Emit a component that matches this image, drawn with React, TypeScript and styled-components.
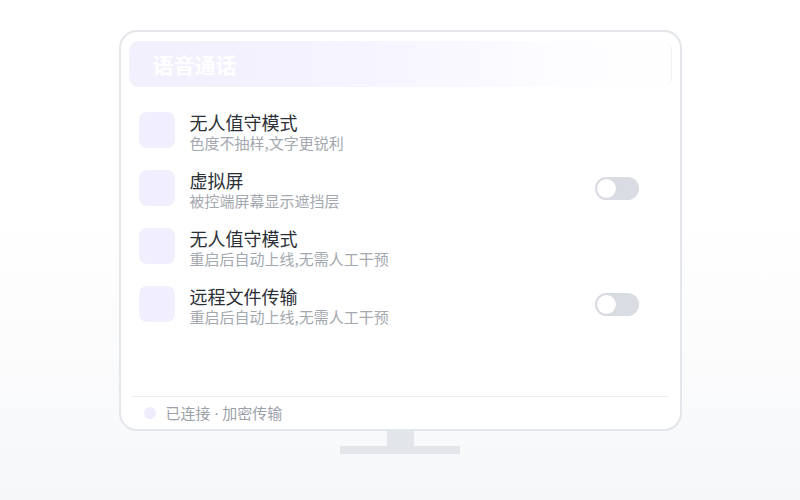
import React from "react";
import styled, { createGlobalStyle } from "styled-components";

const GlobalStyle = createGlobalStyle`
  html, body {
    margin: 0;
    padding: 0;
    background: #ffffff;
  }
  body {
    font-family: "Noto Sans CJK SC", "Noto Sans", sans-serif;
  }
  * { box-sizing: border-box; }
`;

const Page = styled.div`
  width: 800px;
  height: 500px;
  padding-top: 30px;
  display: flex;
  flex-direction: column;
  align-items: center;
  background: linear-gradient(180deg, #ffffff 0%, #ffffff 45%, #f6f7f9 100%);
`;

const Screen = styled.div`
  width: 563px;
  height: 401px;
  border: 2px solid #e3e6ea;
  border-radius: 18px;
  background: #ffffff;
  padding: 9px 8px 0;
  display: flex;
  flex-direction: column;
`;

const Header = styled.div`
  height: 46px;
  border-radius: 10px;
  background: linear-gradient(90deg, #f2effe 0%, #f6f4ff 45%, #fcfbff 75%, #ffffff 100%);
  border-right: 1px solid #f0f0f4;
  display: flex;
  align-items: center;
  padding: 0 0 0 24px;
`;

const HeaderTitle = styled.div`
  color: #ffffff;
  font-size: 21px;
  font-weight: 700;
  line-height: 26px;
`;

const List = styled.div`
  flex: 1;
  padding: 14px 33px 0 10px;
  display: flex;
  flex-direction: column;
`;

const Row = styled.div`
  height: 58px;
  display: flex;
  align-items: center;
  gap: 15px;
`;

const IconBox = styled.div`
  width: 36px;
  height: 36px;
  border-radius: 8px;
  background: #f1eefd;
  flex-shrink: 0;
`;

const TextBlock = styled.div`
  flex: 1;
  display: flex;
  flex-direction: column;
  padding-top: 4px;
`;

const Title = styled.div`
  font-size: 18px;
  line-height: 22px;
  color: #2c2f36;
`;

const Sub = styled.div`
  font-size: 15px;
  line-height: 20px;
  color: #a4a8af;
`;

const Track = styled.div`
  width: 44px;
  height: 23px;
  border-radius: 12px;
  background: #d9dce3;
  padding: 1px;
  display: flex;
  align-items: center;
  flex-shrink: 0;
`;

const Knob = styled.div`
  width: 21px;
  height: 21px;
  border-radius: 50%;
  background: #ffffff;
  border: 1px solid #d3d6dd;
`;

const Footer = styled.div`
  height: 33px;
  margin: 0 3px 0 2px;
  border-top: 1px solid #eceef2;
  display: flex;
  align-items: center;
  gap: 10px;
  padding: 0 0 0 13px;
`;

const Dot = styled.div`
  width: 12px;
  height: 12px;
  border-radius: 50%;
  background: #efecfd;
`;

const FooterText = styled.div`
  font-family: "Noto Sans", "Noto Sans CJK SC", sans-serif;
  font-size: 15px;
  line-height: 20px;
  color: #9ca1a9;
`;

const Neck = styled.div`
  width: 27px;
  height: 15px;
  background: #e2e6ea;
`;

const Base = styled.div`
  width: 120px;
  height: 8px;
  background: #e2e6ea;
`;

type Item = { title: string; sub: string; toggle: boolean };

const items: Item[] = [
  { title: "无人值守模式", sub: "色度不抽样,文字更锐利", toggle: false },
  { title: "虚拟屏", sub: "被控端屏幕显示遮挡层", toggle: true },
  { title: "无人值守模式", sub: "重启后自动上线,无需人工干预", toggle: false },
  { title: "远程文件传输", sub: "重启后自动上线,无需人工干预", toggle: true },
];

export default function App() {
  return (
    <>
      <GlobalStyle />
      <Page>
        <Screen>
          <Header>
            <HeaderTitle>语音通话</HeaderTitle>
          </Header>
          <List>
            {items.map((it, i) => (
              <Row key={i}>
                <IconBox />
                <TextBlock>
                  <Title>{it.title}</Title>
                  <Sub>{it.sub}</Sub>
                </TextBlock>
                {it.toggle && (
                  <Track>
                    <Knob />
                  </Track>
                )}
              </Row>
            ))}
          </List>
          <Footer>
            <Dot />
            <FooterText>已连接 · 加密传输</FooterText>
          </Footer>
        </Screen>
        <Neck />
        <Base />
      </Page>
    </>
  );
}
